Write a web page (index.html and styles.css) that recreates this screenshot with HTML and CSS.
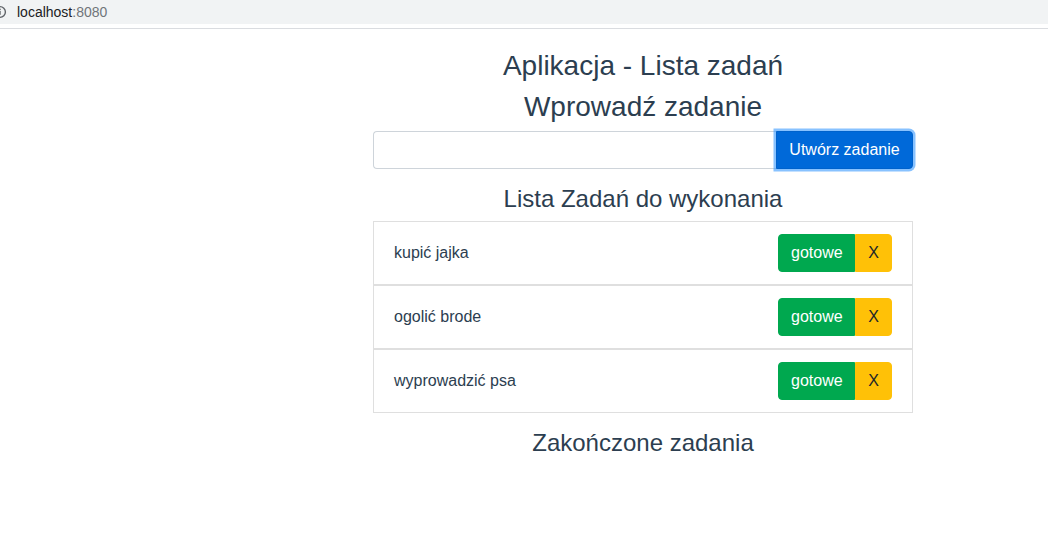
FILE: index.html
```html
<!DOCTYPE html>
<html lang="pl">
<head>
<meta charset="utf-8">
<title>Lista zadań</title>
<link rel="stylesheet" href="styles.css">
</head>
<body>
<div class="chrome">
  <div class="addr">
    <svg class="info" width="14" height="14" viewBox="0 0 14 14"><circle cx="4" cy="7" r="5.4" fill="none" stroke="#5f6368" stroke-width="1.4"/><rect x="3.3" y="6" width="1.4" height="3.8" fill="#5f6368"/><rect x="3.3" y="3.7" width="1.4" height="1.4" fill="#5f6368"/></svg>
    <span class="host">localhost</span><span class="port">:8080</span>
  </div>
</div>
<div class="app">
  <h3 class="title">Aplikacja - Lista zadań</h3>
  <h3 class="title">Wprowadź zadanie</h3>
  <div class="input-group">
    <input class="task-input" type="text">
    <button class="btn btn-primary">Utwórz zadanie</button>
  </div>
  <h4 class="section">Lista Zadań do wykonania</h4>
  <ul class="list">
    <li class="item"><span>kupić jajka</span><div class="btn-group"><button class="btn btn-success">gotowe</button><button class="btn btn-warning">X</button></div></li>
    <li class="item"><span>ogolić brode</span><div class="btn-group"><button class="btn btn-success">gotowe</button><button class="btn btn-warning">X</button></div></li>
    <li class="item"><span>wyprowadzić psa</span><div class="btn-group"><button class="btn btn-success">gotowe</button><button class="btn btn-warning">X</button></div></li>
  </ul>
  <h4 class="section">Zakończone zadania</h4>
</div>
</body>
</html>
```
FILE: styles.css
```css
* { box-sizing: border-box; }
html, body { margin: 0; padding: 0; background: #fff; }
body { font-family: "Liberation Sans", Arial, sans-serif; color: #2c3e50; }
.chrome { height: 29px; background: #fff; border-bottom: 1px solid #dadce0; }
.addr { height: 24px; background: #f1f3f4; display: flex; align-items: center; font-size: 14px; }
.info { margin-left: -4px; margin-right: 7px; }
.host { color: #202124; }
.port { color: #70757a; }
.app { width: 540px; margin-left: 373px; padding-top: 20px; text-align: center; }
.title { font-size: 28px; font-weight: 500; line-height: 1.2; margin: 0 0 7.5px; }
.section { font-size: 24px; font-weight: 500; line-height: 1.2; margin: 15.5px 0 8px; }
.input-group { display: flex; height: 38px; }
.task-input { flex: 1; height: 38px; border: 1px solid #ced4da; border-radius: 4px 0 0 4px; border-right: 0; padding: 6px 12px; font-size: 16px; }
.btn { font-family: inherit; font-size: 16px; line-height: 24px; padding: 6px 12px; border: 1px solid transparent; border-radius: 4px; color: #fff; cursor: pointer; }
.btn-primary { width: 137px; background: #0069d9; border-color: #0062cc; border-radius: 0 4px 4px 0; box-shadow: 0 0 0 2.5px rgba(38,143,255,.55); position: relative; }
.list { list-style: none; margin: 0; padding: 0; text-align: left; }
.item { display: flex; align-items: center; justify-content: space-between; height: 64px; padding: 12px 20px; border: 1px solid #dfdfdf; font-size: 16px; }
.btn-group { display: flex; }
.btn-success { width: 77px; background: #00a84f; border-color: #00a84f; border-radius: 4px 0 0 4px; }
.btn-warning { width: 37px; background: #ffc107; border-color: #ffc107; color: #212529; border-radius: 0 4px 4px 0; }
```
